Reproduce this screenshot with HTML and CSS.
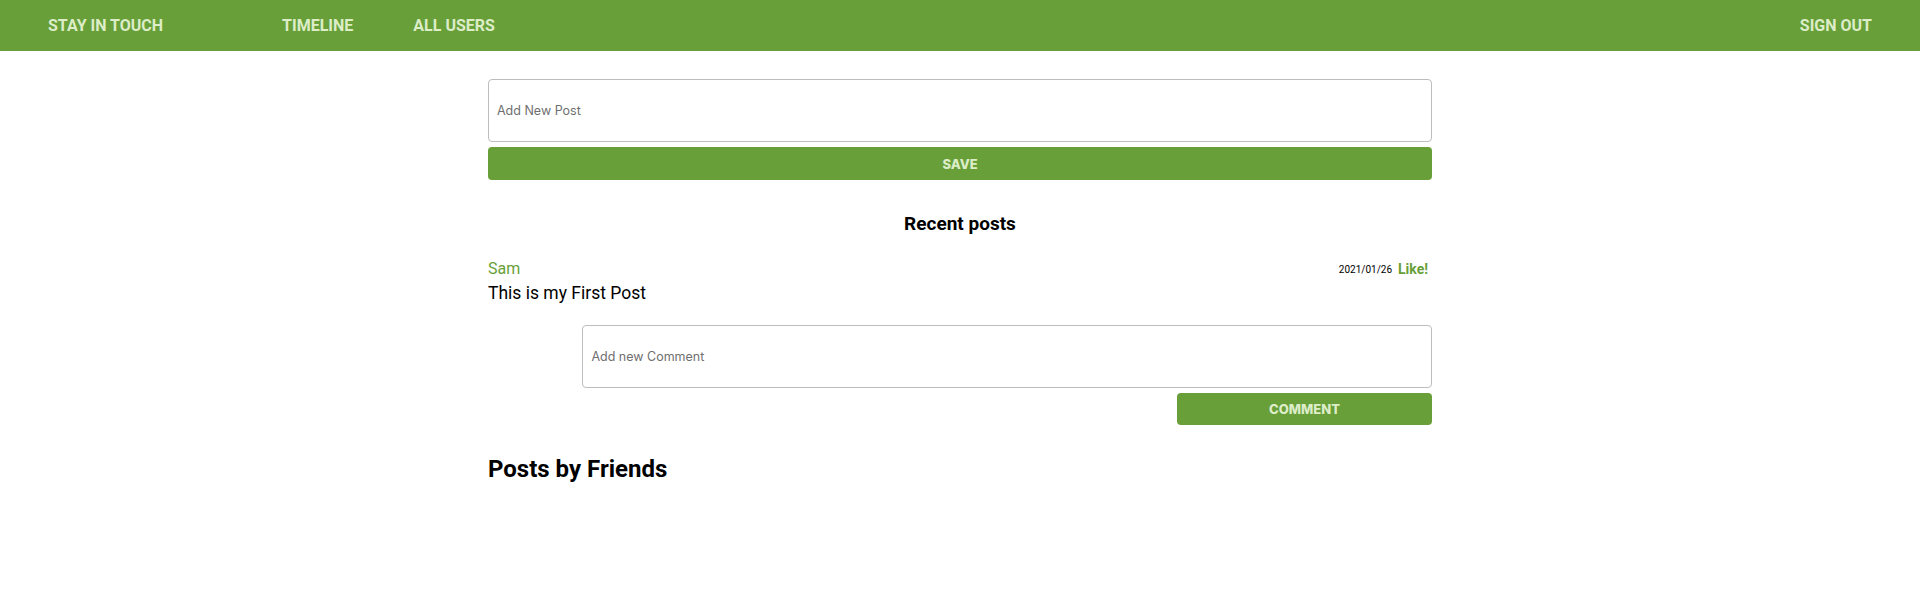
FILE: index.html
```html
<!DOCTYPE html>
<html lang="en">
<head>
<meta charset="utf-8">
<title>Stay in touch</title>
<link rel="stylesheet" href="styles.css">
</head>
<body>
<nav class="nav">
  <a class="brand" href="#">STAY IN TOUCH</a>
  <ul class="nav-links">
    <li><a href="#">TIMELINE</a></li>
    <li><a href="#">ALL USERS</a></li>
  </ul>
  <a class="signout" href="#">SIGN OUT</a>
</nav>
<main class="container">
  <form class="post-form">
    <input class="field" type="text" placeholder="Add New Post">
    <button class="btn" type="button">SAVE</button>
  </form>
  <h3 class="recent-title">Recent posts</h3>
  <article class="post">
    <div class="post-head">
      <a class="author" href="#">Sam</a>
      <div class="meta">
        <span class="date">2021/01/26</span>
        <a class="like" href="#">Like!</a>
      </div>
    </div>
    <p class="post-body">This is my First Post</p>
    <form class="comment-form">
      <input class="field" type="text" placeholder="Add new Comment">
      <div class="comment-actions">
        <button class="btn btn-comment" type="button">COMMENT</button>
      </div>
    </form>
  </article>
  <h2 class="friends-title">Posts by Friends</h2>
</main>
</body>
</html>
```
FILE: styles.css
```css
* { box-sizing: border-box; }
body {
  margin: 0;
  font-family: Roboto, "Liberation Sans", sans-serif;
  color: #000;
  background: #fff;
}
a { text-decoration: none; }

.nav {
  height: 51px;
  background: #689f38;
  display: flex;
  align-items: center;
  padding: 0 48px;
}
.nav a {
  color: #dcedc8;
  font-weight: 700;
  font-size: 16px;
}
.brand { margin-right: 119px; }
.nav-links {
  list-style: none;
  margin: 0;
  padding: 0;
  display: flex;
  gap: 60px;
  flex: 1;
}

.container {
  width: 944px;
  margin: 0 auto;
}
.post-form {
  margin-top: 28px;
  display: flex;
  flex-direction: column;
  gap: 5px;
}
.field {
  height: 63px;
  width: 100%;
  border: 1px solid #bdbdbd;
  border-radius: 4px;
  padding: 0 8px;
  font-family: Inter, "Open Sans", sans-serif;
  font-size: 12.5px;
  color: #333;
  outline: none;
}
.field::placeholder { color: #6f6f6f; }
.btn {
  height: 33px;
  width: 100%;
  border: 0;
  border-radius: 4px;
  background: #689f38;
  color: #dcedc8;
  font-family: Inter, "Open Sans", sans-serif;
  font-weight: 800;
  font-size: 13px;
}
.recent-title {
  margin: 33px 0 0;
  text-align: center;
  font-size: 19px;
  line-height: 22px;
  font-weight: 700;
}
.post { margin-top: 24px; }
.post-head {
  display: flex;
  justify-content: space-between;
  align-items: center;
  height: 20px;
}
.author {
  color: #689f38;
  font-size: 16px;
  line-height: 20px;
}
.meta {
  display: flex;
  align-items: center;
  gap: 6px;
  padding-right: 4px;
}
.date { font-size: 10px; }
.like {
  color: #689f38;
  font-weight: 700;
  font-size: 14px;
}
.post-body {
  margin: 3px 0 0;
  font-size: 17.5px;
  line-height: 22px;
}
.comment-form {
  margin: 21px 0 0 10%;
  display: flex;
  flex-direction: column;
  gap: 5px;
}
.comment-actions {
  display: flex;
  justify-content: flex-end;
}
.btn-comment {
  width: 30%;
  height: 32px;
}
.friends-title {
  margin: 29px 0 0;
  font-size: 24px;
  line-height: 30px;
  font-weight: 700;
}
```
